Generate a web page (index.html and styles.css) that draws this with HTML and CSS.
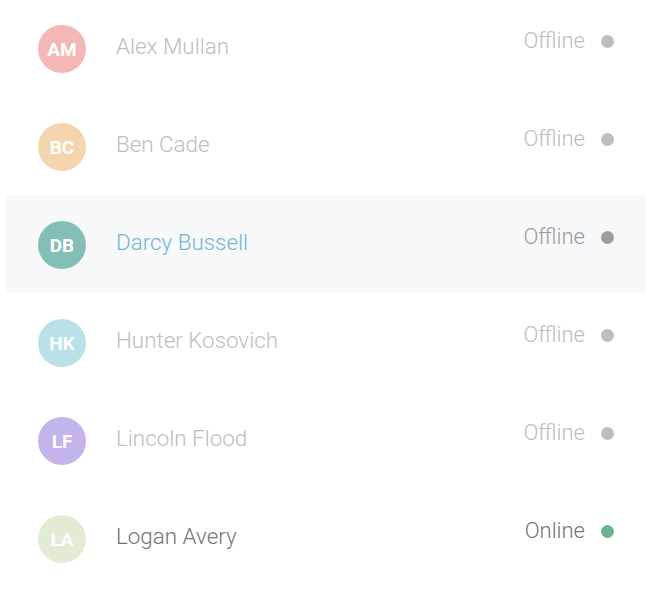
FILE: index.html
```html
<!DOCTYPE html>
<html>
<head>
<meta charset="utf-8">
<link rel="stylesheet" href="styles.css">
</head>
<body>
<ul class="contacts">
  <li class="row">
    <span class="avatar av-am">AM</span>
    <span class="name">Alex Mullan</span>
    <span class="status">Offline<span class="dot"></span></span>
  </li>
  <li class="row">
    <span class="avatar av-bc">BC</span>
    <span class="name">Ben Cade</span>
    <span class="status">Offline<span class="dot"></span></span>
  </li>
  <li class="row active">
    <span class="avatar av-db">DB</span>
    <span class="name">Darcy Bussell</span>
    <span class="status">Offline<span class="dot"></span></span>
  </li>
  <li class="row">
    <span class="avatar av-hk">HK</span>
    <span class="name">Hunter Kosovich</span>
    <span class="status">Offline<span class="dot"></span></span>
  </li>
  <li class="row">
    <span class="avatar av-lf">LF</span>
    <span class="name">Lincoln Flood</span>
    <span class="status">Offline<span class="dot"></span></span>
  </li>
  <li class="row online">
    <span class="avatar av-la">LA</span>
    <span class="name">Logan Avery</span>
    <span class="status">Online<span class="dot"></span></span>
  </li>
</ul>
</body>
</html>
```
FILE: styles.css
```css
html, body {
  margin: 0;
  padding: 0;
  background: #ffffff;
  font-family: Roboto, "Liberation Sans", sans-serif;
}

.contacts {
  list-style: none;
  margin: -1px 0 0 6px;
  padding: 0;
  width: 640px;
}

.row {
  display: flex;
  align-items: center;
  height: 98px;
  padding: 0 32px;
  box-sizing: border-box;
}

.row.active {
  background: #f6f8fa;
}

.avatar {
  flex: none;
  width: 48px;
  height: 48px;
  margin-top: 2px;
  border-radius: 50%;
  display: flex;
  align-items: center;
  justify-content: center;
  color: #ffffff;
  font-weight: 700;
  font-size: 19px;
}

.av-am { background: #f4b7b5; }
.av-bc { background: #f5d5ae; }
.av-db { background: #84bfb5; }
.av-hk { background: #b9e1e7; }
.av-lf { background: #c5b3ec; }
.av-la { background: #e2ecd5; }

.name {
  flex: 1;
  margin-left: 30px;
  margin-bottom: 4px;
  font-size: 22.4px;
  font-weight: 300;
  color: #bdbdbd;
}

.status {
  display: flex;
  align-items: center;
  margin-bottom: 16px;
  font-size: 22px;
  font-weight: 300;
  color: #bdbdbd;
}

.dot {
  width: 13px;
  height: 13px;
  border-radius: 50%;
  background: #bdbdbd;
  margin-left: 16px;
  margin-top: 3px;
}

.row.active .name { color: #74b6d3; }
.row.active .status { color: #9a9a9a; }
.row.active .dot { background: #9e9e9e; }

.row.online .name { color: #737373; }
.row.online .status { color: #737373; }
.row.online .dot { background: #68b48f; }
```
